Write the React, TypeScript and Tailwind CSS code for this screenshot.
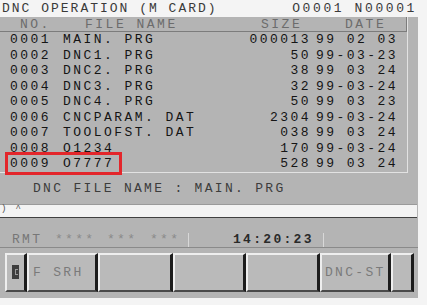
import React from 'react';

const mono = "font-['Liberation_Mono','DejaVu_Sans_Mono',monospace]";

const files = [
  { no: '0001', name: 'MAIN. PRG', size: '000013', date: '99 02 03' },
  { no: '0002', name: 'DNC1. PRG', size: '50', date: '99-03-23' },
  { no: '0003', name: 'DNC2. PRG', size: '38', date: '99 03 24' },
  { no: '0004', name: 'DNC3. PRG', size: '32', date: '99-03-24' },
  { no: '0005', name: 'DNC4. PRG', size: '50', date: '99 03 23' },
  { no: '0006', name: 'CNCPARAM. DAT', size: '2304', date: '99-03-24' },
  { no: '0007', name: 'TOOLOFST. DAT', size: '038', date: '99 03 24' },
  { no: '0008', name: 'O1234', size: '170', date: '99-03-24' },
  { no: '0009', name: 'O7777', size: '528', date: '99 03 24' },
];

const keys = [
  { w: 'w-[22px]', label: 'back' },
  { w: 'w-[71px]', label: 'F SRH' },
  { w: 'w-[75px]', label: '' },
  { w: 'w-[73px]', label: '' },
  { w: 'w-[74px]', label: '' },
  { w: 'w-[71px]', label: 'DNC-ST' },
  { w: 'w-[23px]', label: '' },
];

export default function App() {
  return (
    <div className={`w-[427px] h-[305px] bg-[#f4f4f4] relative overflow-hidden ${mono} slashed-zero`}>
      {/* Title bar */}
      <div className="h-[17px] flex items-center justify-between pl-[2px] pr-[10px] text-[13px] tracking-[2px] text-[#3a3a3a] leading-none">
        <span>DNC OPERATION (M CARD)</span>
        <span className="tracking-[2.6px]">O0001 N00001</span>
      </div>

      <div className="w-[418px] h-[281px] bg-[#b4b4b4] flex flex-col">
        {/* File list panel */}
        <div className="w-[408px] border-r border-b border-[#e2e2e2]">
          <div className="h-[15px] flex items-center border-b border-r border-[#7c7c7c] text-[13px] tracking-[2.5px] text-[#6c6c6c] leading-none">
            <span className="pl-[20px] w-[85px]">NO.</span>
            <span className="w-[176px]">FILE NAME</span>
            <span className="w-[84px]">SIZE</span>
            <span>DATE</span>
          </div>
          {files.map((f) => (
            <div key={f.no} className="h-[15.5px] flex items-center text-[13px] tracking-[2.45px] text-[#151515] leading-none">
              <span className="pl-[10px] w-[63px]">{f.no}</span>
              <span className="w-[181px]">{f.name}</span>
              <span className="w-[67px] text-right">{f.size}</span>
              <span className="pl-[5px]">{f.date}</span>
            </div>
          ))}
        </div>

        {/* DNC file name */}
        <div className="h-[31px] flex items-center pl-[33px] text-[13px] tracking-[2.3px] text-[#3c3c3c] leading-none">
          DNC FILE NAME : MAIN. PRG
        </div>

        {/* Input line */}
        <div className="w-[417px] h-[14px] bg-[#f3f3f3] border-t border-[#9a9a9a] border-b border-b-[#404040] flex items-start pl-[1px] text-[9px] leading-[9px] text-[#555]">
          <span>)</span>
          <span className="ml-[9px]">^</span>
        </div>

        {/* Status line */}
        <div className="mt-[15px] h-[15px] border-b border-[#8a8a8a] flex items-center text-[13px] tracking-[2.3px] leading-none">
          <span className="pl-[12px] w-[55px] text-[#777]">RMT</span>
          <span className="w-[52px] text-[#8a8a8a]">****</span>
          <span className="w-[43px] text-[#8a8a8a]">***</span>
          <span className="w-[38px] text-[#8a8a8a]">***</span>
          <span className="h-full border-l border-[#d8d8d8] w-[45px]" />
          <span className="w-[90px] text-[#2a2a2a] font-bold">14:20:23</span>
          <span className="h-full border-l border-[#d8d8d8]" />
        </div>

        {/* Soft keys */}
        <div className="mt-[5px] h-[39px] pl-[5px] flex">
          {keys.map((k, i) => (
            <div
              key={i}
              className={`${k.w} h-full bg-[#bababa] border-t-2 border-l-2 border-[#eeeeee] border-r-[3px] border-r-[#1c1c1c] border-b-2 border-b-[#4a4a4a] flex items-center text-[13px] tracking-[2.3px] text-[#7a7a7a] leading-none`}
            >
              {k.label === 'back' ? (
                <div className="ml-[5px] w-[7px] h-[14px] bg-[#3e3e3e] relative">
                  <div className="absolute left-[3px] top-[4px] w-[3px] h-[6px] border-l border-t border-b border-[#9a9a9a]" />
                </div>
              ) : (
                <span className={k.label === 'DNC-ST' ? 'pl-[3px]' : 'pl-[4px]'}>{k.label}</span>
              )}
            </div>
          ))}
        </div>
      </div>

      {/* Highlight box */}
      <div className="absolute left-[5px] top-[152px] w-[117px] h-[23px] border-[3px] border-[#e3262b]" />
    </div>
  );
}
